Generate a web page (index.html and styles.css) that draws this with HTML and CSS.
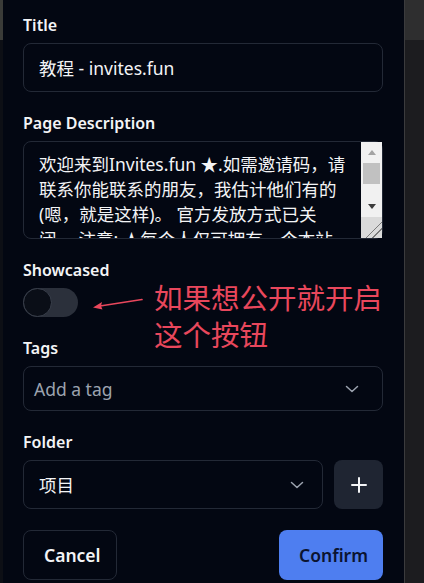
FILE: index.html
```html
<!DOCTYPE html>
<html lang="zh-CN">
<head>
  <meta charset="UTF-8">
  <meta name="viewport" content="width=device-width, initial-scale=1.0">
  <title>Edit page</title>
  <link rel="stylesheet" href="styles.css">
</head>
<body>
  <div class="screen">
    <div class="edge-left"></div>

    <form class="dialog">
      <div class="field">
        <label class="label" for="title">Title</label>
        <input id="title" class="input" type="text" value="教程 - invites.fun">
      </div>

      <div class="field">
        <label class="label" for="desc">Page Description</label>
        <div class="desc-wrap">
          <textarea id="desc" class="input desc">欢迎来到Invites.fun ★.如需邀请码，请联系你能联系的朋友，我估计他们有的(嗯，就是这样)。 官方发放方式已关闭。 注意: ★每个人仅可拥有一个本站账号，请勿重复注册，违者封号处理。</textarea>
          <div class="rail" aria-hidden="true">
            <span class="rail-btn"><span class="tri tri-up"></span></span>
            <span class="rail-thumb"></span>
            <span class="rail-track"></span>
            <span class="rail-btn"><span class="tri tri-down"></span></span>
            <span class="rail-grip"></span>
          </div>
        </div>
      </div>

      <div class="field">
        <span class="label">Showcased</span>
        <button type="button" class="switch" role="switch" aria-checked="false"><span class="knob"></span></button>
      </div>

      <div class="field">
        <label class="label">Tags</label>
        <div class="select select-tags">
          <span class="placeholder">Add a tag</span>
          <svg class="chevron" width="14" height="8" viewBox="0 0 14 8"><path d="M1.5 1.5l5.5 5 5.5-5" fill="none" stroke="#9ca3af" stroke-width="1.5" stroke-linecap="round" stroke-linejoin="round"/></svg>
        </div>
      </div>

      <div class="field">
        <label class="label">Folder</label>
        <div class="folder-row">
          <div class="select select-folder">
            <span class="value">项目</span>
            <svg class="chevron" width="14" height="8" viewBox="0 0 14 8"><path d="M1.5 1.5l5.5 5 5.5-5" fill="none" stroke="#9ca3af" stroke-width="1.5" stroke-linecap="round" stroke-linejoin="round"/></svg>
          </div>
          <button type="button" class="add-btn" aria-label="New folder">
            <svg width="16" height="16" viewBox="0 0 16 16"><path d="M8 1v14M1 8h14" stroke="#f3f4f6" stroke-width="2" stroke-linecap="round"/></svg>
          </button>
        </div>
      </div>

      <div class="actions">
        <button type="button" class="btn btn-cancel">Cancel</button>
        <button type="button" class="btn btn-confirm">Confirm</button>
      </div>

      <!-- red annotation drawn over the screenshot -->
      <div class="note">
        <div>如果想公开就开启</div>
        <div>这个按钮</div>
      </div>
      <svg class="note-arrow" width="52" height="14" viewBox="0 0 52 14">
        <path d="M50 1.5L8 8" stroke="#e9475c" stroke-width="1.6" stroke-linecap="round"/>
        <path d="M1 9.5l9-5.5-1 4 1.5 3.5z" fill="#e9475c"/>
      </svg>
    </form>

    <div class="edge-right"><div class="edge-top"></div></div>
  </div>
</body>
</html>
```

FILE: styles.css
```css
:root {
  --bg: #030712;
  --border: #232936;
  --text: #f3f4f6;
  --muted: #9ca3af;
  --note: #e9475c;
}

html, body {
  margin: 0;
  padding: 0;
  height: 583px;
  overflow: hidden;
  background: var(--bg);
}

body {
  font-family: "Noto Sans", "Noto Sans CJK SC", sans-serif;
  color: var(--text);
}

.screen {
  display: flex;
  height: 583px;
}

.edge-left {
  width: 3px;
  background: linear-gradient(#3a3b38 0 40px, #0d0f15 40px);
}

.dialog {
  position: relative;
  width: 401px;
  box-sizing: border-box;
  padding: 13px 21px 0 20px;
  background: var(--bg);

  display: flex;
  flex-direction: column;
  gap: 19px;
}

.edge-right {
  flex: 1;
  border-left: 1px solid #3b3b3d;
  background: #1c1c1f;
}
.edge-top {
  height: 40px;
  background: #2e2e2f;
}

.field {
  display: flex;
  flex-direction: column;
  gap: 6px;
}

.label {
  font-size: 16px;
  line-height: 24px;
  font-weight: 600;
  color: var(--text);
}

.input {
  box-sizing: border-box;
  width: 100%;
  height: 49px;
  padding: 0 15px;
  border: 1px solid var(--border);
  border-radius: 8px;
  background: var(--bg);
  color: var(--text);
  font: inherit;
  font-size: 17.5px;
  outline: none;
}

/* description box with a light, classic-looking scrollbar */
.desc-wrap {
  position: relative;
}
.desc {
  display: block;
  height: 98px;
  padding: 10px 35px 10px 15px;
  line-height: 25px;
  resize: none;
  overflow: hidden;
}
.rail {
  position: absolute;
  top: 1px;
  right: 1px;
  bottom: 1px;
  width: 21px;
  background: #f1f1f1;
  display: flex;
  flex-direction: column;
}
.rail-btn {
  height: 21px;
  display: flex;
  align-items: center;
  justify-content: center;
}
.tri {
  width: 0;
  height: 0;
  border-left: 4.5px solid transparent;
  border-right: 4.5px solid transparent;
}
.tri-up {
  border-bottom: 5px solid #a3a3a3;
}
.tri-down {
  border-top: 5px solid #3c3c3c;
}
.rail-thumb {
  height: 21px;
  margin: 0 2px;
  background: #c1c1c1;
}
.rail-track {
  flex: 1;
}
.rail-grip {
  height: 21px;
  background:
    linear-gradient(135deg, transparent 60%, #7a7a7a 60%, #7a7a7a 64%, transparent 64%, transparent 76%, #7a7a7a 76%, #7a7a7a 80%, transparent 80%),
    #dadada;
}

.switch {
  width: 55px;
  height: 29px;
  padding: 0;
  border: 0;
  border-radius: 15px;
  background: #2b303b;
  display: flex;
  align-items: center;
}
.knob {
  box-sizing: border-box;
  width: 29px;
  height: 29px;
  border-radius: 50%;
  background: #0a0e17;
  border: 1.5px solid #3a404c;
}

.select {
  box-sizing: border-box;
  display: flex;
  align-items: center;
  justify-content: space-between;
  border: 1px solid var(--border);
  border-radius: 8px;
  font-size: 17.5px;
}
.select-tags {
  height: 45px;
  padding: 0 23px 0 10px;
}
.select-tags .placeholder {
  color: var(--muted);
}
.select-folder {
  flex: 1;
  height: 49px;
  padding: 0 18px 0 15px;
}
.chevron {
  display: block;
}

.folder-row {
  display: flex;
  gap: 11px;
}
.add-btn {
  width: 49px;
  height: 49px;
  border: 0;
  border-radius: 8px;
  background: #1f2532;
  display: flex;
  align-items: center;
  justify-content: center;
}

.actions {
  margin-top: 2px;
  display: flex;
  justify-content: space-between;
}
.btn {
  height: 50px;
  padding: 0 20px;
  border-radius: 8px;
  font: inherit;
  font-size: 17.5px;
  font-weight: 600;
}
.btn-cancel {
  width: 94px;
  border: 1px solid var(--border);
  background: var(--bg);
  color: var(--text);
}
.btn-confirm {
  width: 104px;
  border: 0;
  background: #4e7ef0;
  color: #0b1431;
}

.note {
  position: absolute;
  left: 151px;
  top: 278px;
  font-family: "Noto Sans CJK SC", sans-serif;
  font-size: 28.5px;
  line-height: 37px;
  color: var(--note);
  white-space: nowrap;
}
.note div {
  height: 37px;
}
.note-arrow {
  position: absolute;
  left: 89px;
  top: 298px;
}
```
